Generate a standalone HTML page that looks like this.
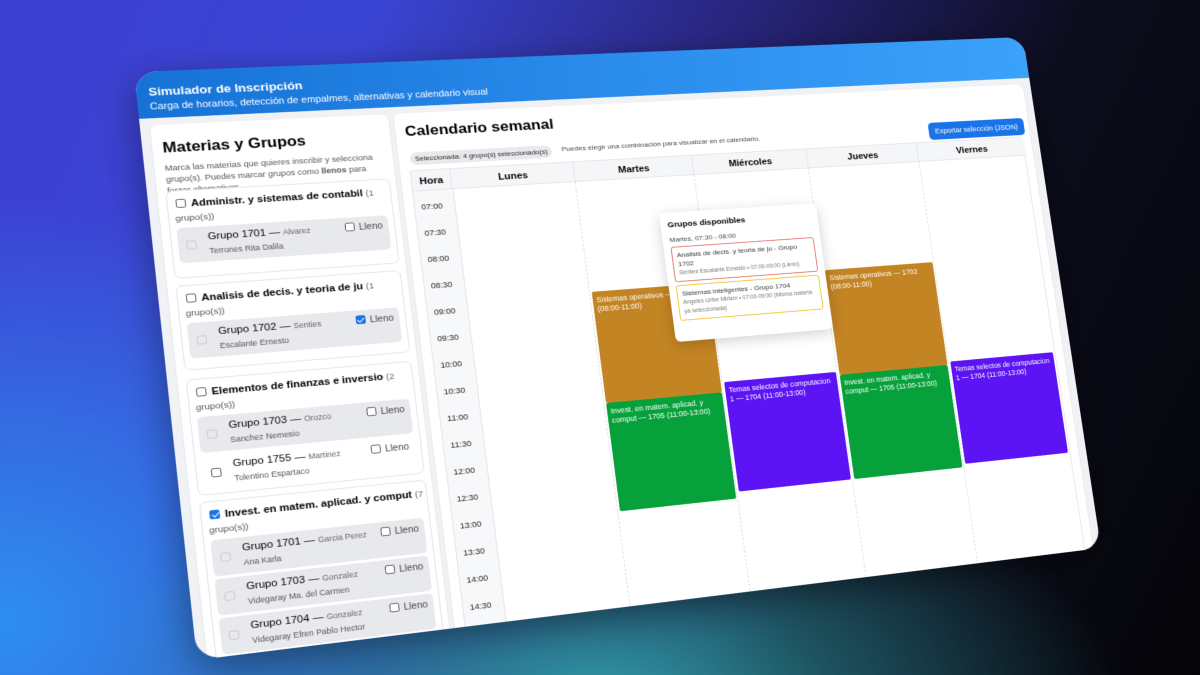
<!DOCTYPE html>
<html><head><meta charset="utf-8">
<style>
*{box-sizing:border-box;margin:0;padding:0}
html,body{width:1200px;height:675px;overflow:hidden}
body{font-family:"Liberation Sans",Arial,sans-serif;position:relative;
background:
radial-gradient(ellipse 520px 260px at 600px 700px,#2f9aa6 0%,rgba(47,154,166,0.5) 45%,rgba(47,154,166,0) 100%),
radial-gradient(ellipse 500px 420px at 0px 620px,#2e8ff0 0%,rgba(46,143,240,0) 100%),
linear-gradient(115deg,#3d3fd2 0%,#3a45d4 25%,#27247a 50%,#0c0c1c 72%,#050509 100%);}
#card{position:absolute;left:0;top:0;width:1000px;height:660px;transform-origin:0 0;
transform:matrix3d(1.03664,-0.02966,0,0.00014432,0.086785,0.861864,0,-0.00004401,0,0,1,0,134,72,0,1);
background:#f1f2f5;border-radius:24px;overflow:hidden;box-shadow:0 10px 40px rgba(0,0,0,.4)}
#hdr{position:absolute;left:0;top:0;width:1000px;height:54px;background:linear-gradient(90deg,#1672d6,#2a8cec 50%,#3ba2fa);color:#fff;padding:16px 12px 0}
#hdr b{font-size:13px;display:block}
#hdr span{font-size:10.5px}
.panel{position:absolute;background:#fff;border-radius:8px;box-shadow:0 1px 3px rgba(0,0,0,.08)}
#left{left:10px;top:62px;width:242px;height:620px;padding:12px 10px;overflow:hidden}
#left h2{font-size:16.5px;margin-top:6px}
.desc{font-size:9px;color:#555;line-height:13px;margin-top:7px}
.subj{position:absolute;left:8px;width:228px;border:1px solid #e3e4e8;border-radius:7px;background:#fff}
.st{font-size:11px;font-weight:bold;padding:8px 6px 0 8px;line-height:14px;white-space:nowrap}
.st i{font-style:normal;font-weight:normal;color:#666;font-size:9.5px}
.gs{font-size:9.5px;color:#555;padding:3px 6px 2px 6px}
.cb{display:inline-block;width:10px;height:10px;border:1px solid #666;border-radius:2px;vertical-align:-1px;margin-right:5px;background:#fff}
.cb.on{background:#1a73e8;border-color:#1a73e8;position:relative}
.cb.on:after{content:"";position:absolute;left:2.5px;top:0px;width:3px;height:6px;border:solid #fff;border-width:0 1.5px 1.5px 0;transform:rotate(45deg)}
.row{position:relative;margin:3px 6px;height:40px;background:#e8e9ec;border-radius:5px}
.row.w{background:#fff}
.row .dc{position:absolute;left:8px;top:15px;width:10px;height:10px;border:1px solid #ccc;border-radius:2px}
.row.w .dc{border-color:#666}
.row .g{position:absolute;left:30px;top:6px;font-size:11px;white-space:nowrap}
.row .g small{font-size:8.5px;color:#666}
.row .n{position:absolute;left:30px;top:23px;font-size:8.5px;color:#555;white-space:nowrap}
.row .l{position:absolute;right:6px;top:6px;font-size:10px;color:#444}
#cal{left:258px;top:62px;width:732px;height:620px}
#cal h2{position:absolute;left:10px;top:12px;font-size:17px}
.chip{position:absolute;left:12px;top:47px;font-size:7.8px;background:#e8e9ec;border-radius:8px;padding:3px 5px;color:#222}
.hint{position:absolute;left:176px;top:48px;font-size:8px;color:#444}
.btn{position:absolute;right:6px;top:44px;background:#1a73e8;color:#fff;font-size:8.8px;padding:6px 8px;border-radius:5px}
#grid{position:absolute;left:10px;top:68px;width:712px;height:560px;border:1px solid #e3e4e8}
.hd{position:absolute;top:0;height:24px;background:#f5f6f8;border-bottom:1px solid #e3e4e8;font-size:11px;font-weight:bold;text-align:center;line-height:26px;border-right:1px solid #e3e4e8}
.col{position:absolute;top:24px;bottom:0;border-right:1px dashed #dcdde1}
.hora{position:absolute;left:0;top:24px;width:42px;bottom:0;background:#f7f8fa}
.t{position:absolute;left:0;width:36px;text-align:center;font-size:9px;color:#222}
.ev{position:absolute;color:#fff;font-size:8.3px;padding:5px 4px;line-height:11px;border-radius:2px}
.or{background:#c38423}.gr{background:#07a13b}.pu{background:#5c14f4}
#pop{position:absolute;left:264px;top:68px;width:182px;height:157px;background:#fff;border-radius:6px;box-shadow:0 4px 16px rgba(0,0,0,.18);padding:10px 8px}
#pop b{font-size:9.5px;display:block}
#pop .s{font-size:8px;color:#444;margin-top:8px}
.opt{border:1px solid #e46b6b;border-radius:3px;padding:4px 5px;margin-top:4px;font-size:8px;color:#333;line-height:11px}
.opt small{font-size:6.5px;color:#777;display:block}
.opt.y{border-color:#f0c020}
</style></head><body>
<div id="card">
<div id="hdr"><b>Simulador de Inscripción</b><span>Carga de horarios, detección de empalmes, alternativas y calendario visual</span></div>
<div class="panel" id="left">
<h2>Materias y Grupos</h2>
<div class="desc">Marca las materias que quieres inscribir y selecciona grupo(s). Puedes marcar grupos como <b>llenos</b> para forzar alternativas.</div>
<div class="subj" style="top:76px;height:100px">
<div class="st"><span class="cb"></span>Administr. y sistemas de contabil <i>(1</i></div>
<div class="gs">grupo(s))</div>
<div class="row"><span class="dc"></span><div class="g">Grupo 1701 — <small>Alvarez</small></div><div class="n">Terrones Rita Dalila</div><div class="l"><span class="cb"></span>Lleno</div></div>
</div>
<div class="subj" style="top:184px;height:96px">
<div class="st"><span class="cb"></span>Analisis de decis. y teoria de ju <i>(1</i></div>
<div class="gs">grupo(s))</div>
<div class="row"><span class="dc"></span><div class="g">Grupo 1702 — <small>Senties</small></div><div class="n">Escalante Ernesto</div><div class="l"><span class="cb on"></span>Lleno</div></div>
</div>
<div class="subj" style="top:290px;height:130px">
<div class="st"><span class="cb"></span>Elementos de finanzas e inversio <i>(2</i></div>
<div class="gs">grupo(s))</div>
<div class="row"><span class="dc"></span><div class="g">Grupo 1703 — <small>Orozco</small></div><div class="n">Sanchez Nemesio</div><div class="l"><span class="cb"></span>Lleno</div></div>
<div class="row w"><span class="dc"></span><div class="g">Grupo 1755 — <small>Martinez</small></div><div class="n">Tolentino Espartaco</div><div class="l"><span class="cb"></span>Lleno</div></div>
</div>
<div class="subj" style="top:427px;height:240px">
<div class="st"><span class="cb on"></span>Invest. en matem. aplicad. y comput <i>(7</i></div>
<div class="gs">grupo(s))</div>
<div class="row"><span class="dc"></span><div class="g">Grupo 1701 — <small>Garcia Perez</small></div><div class="n">Ana Karla</div><div class="l"><span class="cb"></span>Lleno</div></div>
<div class="row"><span class="dc"></span><div class="g">Grupo 1703 — <small>Gonzalez</small></div><div class="n">Videgaray Ma. del Carmen</div><div class="l"><span class="cb"></span>Lleno</div></div>
<div class="row"><span class="dc"></span><div class="g">Grupo 1704 — <small>Gonzalez</small></div><div class="n">Videgaray Efren Pablo Hector</div><div class="l"><span class="cb"></span>Lleno</div></div>
<div class="row"><span class="dc"></span><div class="g">Grupo 1705 — <small>Gonzalez</small></div><div class="n"></div></div>
</div>
</div>
<div class="panel" id="cal">
<h2>Calendario semanal</h2>
<div class="btn">Exportar selección (JSON)</div>
<div class="chip">Seleccionada: 4 grupo(s) seleccionado(s)</div>
<div class="hint">Puedes elegir una combinación para visualizar en el calendario.</div>
<div id="grid">
<div class="hora">
<div class="t" style="top:14px">07:00</div><div class="t" style="top:45px">07:30</div><div class="t" style="top:76px">08:00</div><div class="t" style="top:107px">08:30</div><div class="t" style="top:138px">09:00</div><div class="t" style="top:169px">09:30</div><div class="t" style="top:200px">10:00</div><div class="t" style="top:231px">10:30</div><div class="t" style="top:262px">11:00</div><div class="t" style="top:293px">11:30</div><div class="t" style="top:324px">12:00</div><div class="t" style="top:355px">12:30</div><div class="t" style="top:386px">13:00</div><div class="t" style="top:417px">13:30</div><div class="t" style="top:448px">14:00</div><div class="t" style="top:479px">14:30</div>
</div>
<div class="hd" style="left:0;width:42px">Hora</div>
<div class="hd" style="left:42px;width:134px">Lunes</div>
<div class="hd" style="left:176px;width:134px">Martes</div>
<div class="hd" style="left:310px;width:134px">Miércoles</div>
<div class="hd" style="left:444px;width:134px">Jueves</div>
<div class="hd" style="left:578px;width:134px;border-right:0">Viernes</div>
<div class="col" style="left:42px;width:134px;border-left:1px solid #e3e4e8"></div>
<div class="col" style="left:176px;width:134px"></div>
<div class="col" style="left:310px;width:134px"></div>
<div class="col" style="left:444px;width:134px"></div>
<div class="ev or" style="left:178px;width:130px;top:157px;height:133px">Sistemas operativos — 1702<br>(08:00-11:00)</div>
<div class="ev gr" style="left:178px;width:130px;top:290px;height:128px">Invest. en matem. aplicad. y comput — 1705 (11:00-13:00)</div>
<div class="ev pu" style="left:312px;width:130px;top:278px;height:132px">Temas selectos de computacion 1 — 1704 (11:00-13:00)</div>
<div class="ev or" style="left:446px;width:130px;top:152px;height:130px">Sistemas operativos — 1702<br>(08:00-11:00)</div>
<div class="ev gr" style="left:446px;width:130px;top:282px;height:128px">Invest. en matem. aplicad. y comput — 1705 (11:00-13:00)</div>
<div class="ev pu" style="left:580px;width:128px;top:278px;height:128px">Temas selectos de computacion 1 — 1704 (11:00-13:00)</div>
<div id="pop"><b>Grupos disponibles</b><div class="s">Martes, 07:30 - 08:00</div>
<div class="opt">Analisis de decis. y teoria de ju - Grupo 1702<small>Senties Escalante Ernesto • 07:00-09:00 (Lleno)</small></div>
<div class="opt y">Sistemas inteligentes - Grupo 1704<small>Angeles Uribe Miriam • 07:00-09:00 (Misma materia ya seleccionada)</small></div>
</div>
</div>
</div>
</div>
</body></html>
